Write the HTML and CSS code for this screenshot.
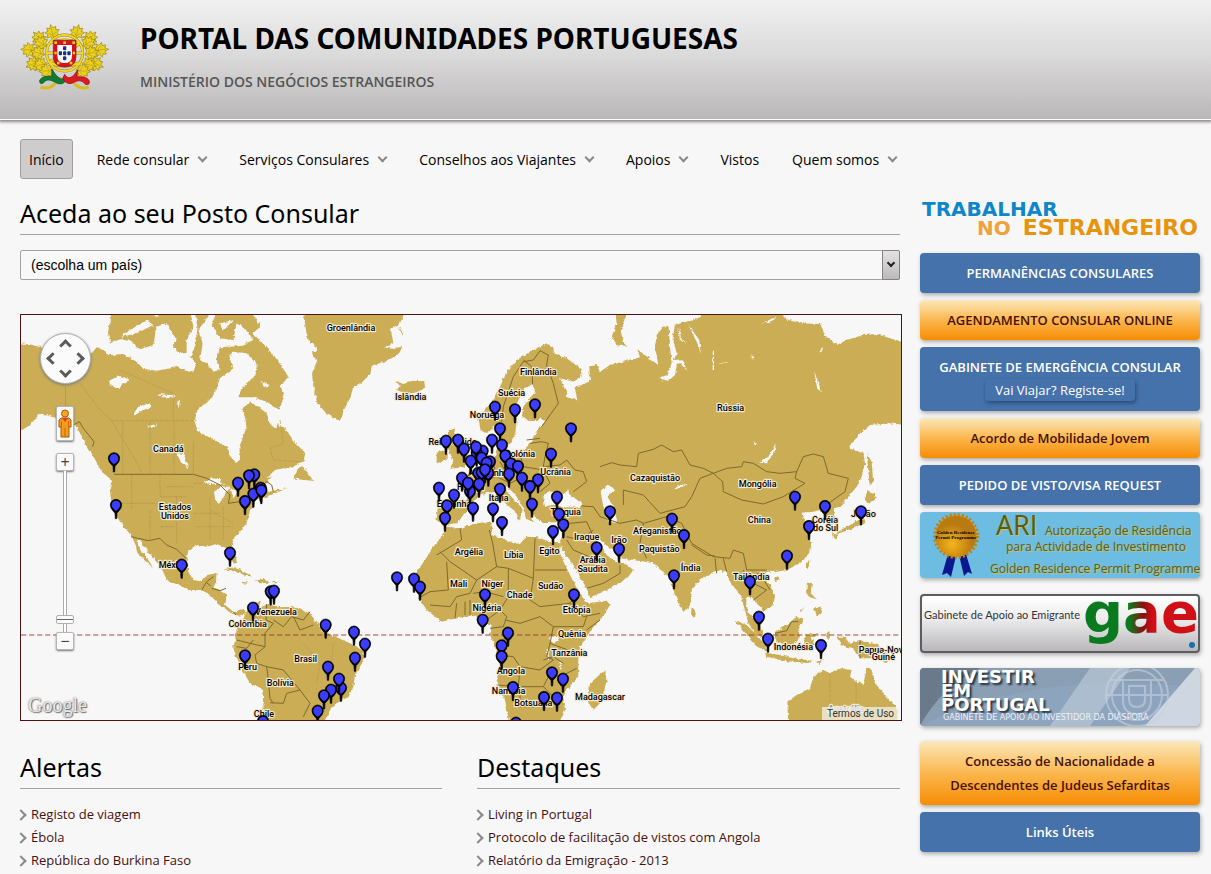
FILE: index.html
```html
<!DOCTYPE html>
<html lang="pt">
<head>
  <meta charset="UTF-8" />
  <meta name="viewport" content="width=device-width, initial-scale=1.0" />
  <title>Portal das Comunidades Portuguesas</title>
  <link rel="stylesheet" href="styles.css">
</head>
<body>
  <header class="site-header">
    <svg class="crest" viewBox="62 73 270 198" role="img" aria-label="Brasão de Portugal">
      <defs>
        <g id="leaf">
          <path d="M0 0 L-8 -8 L-19 -7 L-14 -16 L-22 -24 L-12 -26 L-14 -36 L-5 -33 L0 -44 L5 -33 L14 -36 L12 -26 L22 -24 L14 -16 L19 -7 L8 -8 Z" fill="#ebd022" stroke="#9a8412" stroke-width="2"/>
          <path d="M0 0 V-34 M0 -10 L-11 -20 M0 -10 L11 -20" fill="none" stroke="#b59e18" stroke-width="2"/>
        </g>
        <g id="branch">
          <path d="M188 238 Q110 225 118 130" fill="none" stroke="#b39a14" stroke-width="6"/>
          <use href="#leaf" transform="translate(163 118) rotate(-12)"/>
          <use href="#leaf" transform="translate(132 130) rotate(-42)"/>
          <use href="#leaf" transform="translate(142 140) rotate(-60)"/>
          <use href="#leaf" transform="translate(108 152) rotate(-86)"/>
          <use href="#leaf" transform="translate(136 165) rotate(-75)"/>
          <use href="#leaf" transform="translate(120 184) rotate(-115)"/>
          <use href="#leaf" transform="translate(144 192) rotate(-100)"/>
          <use href="#leaf" transform="translate(162 212) rotate(-95)"/>
        </g>
      </defs>
      <use href="#branch"/>
      <use href="#branch" transform="translate(392 0) scale(-1 1)"/>
      <g fill="none" stroke="#9a8410" stroke-width="9">
        <circle cx="196" cy="160" r="54"/>
        <path d="M142 160 H250 M153 130 Q196 112 239 130 M153 190 Q196 208 239 190 M150 188 L242 132"/>
      </g>
      <g fill="none" stroke="#f0d62a" stroke-width="6">
        <circle cx="196" cy="160" r="54"/>
        <path d="M142 160 H250 M153 130 Q196 112 239 130 M153 190 Q196 208 239 190 M150 188 L242 132"/>
      </g>
      <path d="M162 122 H230 V170 Q230 202 196 202 Q162 202 162 170 Z" fill="#d8121c" stroke="#8c1a10" stroke-width="2"/>
      <path d="M174 136 H218 V168 Q218 190 196 190 Q174 190 174 168 Z" fill="#fff"/>
      <g fill="#e8c81e"><rect x="165" y="125" width="8" height="8"/><rect x="192" y="125" width="8" height="8"/><rect x="219" y="125" width="8" height="8"/><rect x="165" y="156" width="7" height="8"/><rect x="220" y="156" width="7" height="8"/><rect x="173" y="186" width="8" height="8"/><rect x="211" y="186" width="8" height="8"/></g>
      <g fill="#16357c"><rect x="191" y="140" width="10" height="12" rx="3"/><rect x="178" y="155" width="10" height="12" rx="3"/><rect x="191" y="155" width="10" height="12" rx="3"/><rect x="204" y="155" width="10" height="12" rx="3"/><rect x="191" y="170" width="10" height="12" rx="3"/></g>
      <path d="M124 262 Q150 272 168 250 M268 262 Q242 272 224 250" fill="none" stroke="#d8bc1a" stroke-width="9"/>
      <path d="M157 208 L170 226 Q190 250 196 228 L202 240 Q188 262 164 246 Q142 234 132 250 Q120 256 121 242 Q130 226 158 230 Z" fill="#157a35" stroke="#0a5222" stroke-width="2"/>
      <path d="M236 210 L222 228 Q206 242 196 224 L190 236 Q204 262 228 246 Q246 238 258 254 Q272 258 270 244 Q264 228 232 232 Z" fill="#dc1a22" stroke="#941016" stroke-width="2"/>
    </svg>
    <div class="titles">
      <h1>PORTAL DAS COMUNIDADES PORTUGUESAS</h1>
      <p>MINISTÉRIO DOS NEGÓCIOS ESTRANGEIROS</p>
    </div>
  </header>

  <nav class="main-nav">
    <a href="#" class="active">Início</a>
    <a href="#" class="has-sub">Rede consular</a>
    <a href="#" class="has-sub">Serviços Consulares</a>
    <a href="#" class="has-sub">Conselhos aos Viajantes</a>
    <a href="#" class="has-sub">Apoios</a>
    <a href="#">Vistos</a>
    <a href="#" class="has-sub">Quem somos</a>
  </nav>

  <div class="page">
    <main class="content">
      <h2><label for="pais">Aceda ao seu Posto Consular</label></h2>
      <div class="select-box">
        <select id="pais">
          <option>(escolha um país)</option>
        </select>
      </div>

      <div class="map">
        <svg class="world" viewBox="3 15 2640 1215">
          <defs>
            <filter id="coast" x="0" y="0" width="100%" height="100%">
              <feTurbulence type="fractalNoise" baseFrequency="0.09" numOctaves="3" seed="4"/>
              <feDisplacementMap in="SourceGraphic" scale="11" xChannelSelector="R" yChannelSelector="G"/>
            </filter>
            <g id="pin">
              <path d="M-2 39 L-3 22 Q-18 8 -17 -2 A17 17 0 0 1 17 -2 Q18 8 3 22 L2 39 Z" fill="#000" stroke="#000" stroke-width="2"/>
              <path d="M0 16 Q-14 6 -13 -2 A13 13 0 0 1 13 -2 Q14 6 0 16 Z" fill="#3c3cff"/>
            </g>
          </defs>

          <g filter="url(#coast)">
            <rect x="-20" y="0" width="2700" height="1260" fill="#f8f7f7"/>
            <g class="land">
              <!-- North and Central America -->
              <path d="M-10 98 L40 105 60 112 120 122 215 130 230 112 262 120 270 95 264 70 274 0 690 0 722 50 698 70 740 112 772 150 805 200 782 228 792 262 778 300 770 340 800 360 820 392 856 430 850 455 820 470 790 483 760 495 742 515 735 528 745 545 775 540 802 533 770 548 740 560 705 570 690 600 684 625 680 640 660 665 640 685 635 705 645 730 650 752 642 762 630 740 620 715 590 702 560 710 530 705 505 720 500 750 505 785 520 810 545 815 560 795 590 790 588 815 580 835 605 845 620 855 615 885 640 905 668 898 682 905 662 918 640 912 620 900 600 885 570 855 545 840 510 840 475 825 440 810 430 785 405 750 385 725 360 690 350 692 362 722 382 745 398 772 375 752 352 728 348 708 338 685 325 665 300 635 285 610 275 590 270 540 275 510 245 485 215 430 195 400 180 370 165 345 140 335 110 325 60 310 30 345 -10 370 Z"/>
              <path d="M838 465 L858 480 880 512 850 510 820 505 Z"/>
              <path d="M610 778 L645 772 700 800 672 796 640 782 Z M705 812 L735 806 748 818 720 820 Z M665 816 l18 0 -2 5 -14 -1 Z M758 816 l12 0 0 4 -12 0 Z"/>
              <!-- South America -->
              <path d="M680 905 L700 882 722 872 716 894 745 882 780 892 830 890 868 908 885 930 905 960 950 982 990 1000 1022 1015 1035 1040 1020 1070 1005 1095 1000 1130 985 1162 960 1172 930 1200 905 1250 735 1250 730 1180 728 1140 690 1120 670 1085 650 1045 640 1015 645 990 650 960 665 935 Z"/>
              <!-- Greenland, Iceland, British Isles -->
              <path d="M848 0 L858 60 868 100 880 140 892 150 876 190 880 230 893 280 920 312 962 333 972 300 992 260 998 235 1025 218 1052 190 1055 168 1092 155 1140 130 1146 110 1130 90 1150 70 1135 50 1158 0 Z"/>
              <path d="M1126 212 L1150 222 1180 212 1212 214 1216 232 1195 246 1160 252 1130 240 1142 230 Z"/>
              <path d="M1285 362 L1306 355 1300 375 1322 400 1332 432 1350 452 1332 472 1290 476 1300 452 1286 420 1280 385 Z M1250 430 L1280 416 1280 450 1250 460 Z"/>
              <!-- Scandinavia -->
              <path d="M1382 362 L1375 325 1395 300 1420 270 1440 230 1460 185 1490 150 1530 125 1580 100 1600 112 1602 130 1640 145 1682 175 1685 200 1660 215 1620 205 1640 250 1600 325 1560 334 1522 332 1506 318 1510 290 1545 245 1538 222 1515 235 1500 262 1480 300 1490 330 1486 370 1470 402 1450 405 1440 370 1430 342 1400 368 Z"/>
              <!-- Eurasia -->
              <path d="M1255 568 L1340 572 1345 535 1310 515 1345 500 1380 480 1420 455 1435 400 1445 385 1455 430 1500 432 1530 400 1525 370 1550 345 1575 338 1572 300 1600 215 1640 262 1672 270 1664 232 1710 215 1708 170 1730 165 1740 185 1770 165 1820 152 1860 142 1852 118 1895 150 1915 165 1905 110 1910 75 1930 50 1955 46 1975 42 2030 28 2060 0 2280 0 2300 28 2340 40 2400 42 2420 80 2450 105 2480 90 2530 75 2570 72 2610 85 2660 100 2660 345 2610 340 2550 345 2520 370 2485 415 2530 430 2535 460 2525 500 2510 530 2485 560 2460 590 2440 595 2448 640 2425 650 2415 620 2400 600 2380 605 2345 608 2350 625 2365 645 2370 690 2375 710 2360 740 2340 760 2300 780 2270 785 2240 785 2230 800 2250 825 2265 855 2260 885 2230 905 2215 885 2195 862 2180 860 2178 890 2190 915 2210 930 2225 960 2230 985 2205 970 2185 940 2175 900 2165 865 2150 840 2135 825 2120 790 2100 780 2070 790 2040 810 2015 840 2015 870 2005 895 1990 905 1975 880 1960 840 1950 800 1925 785 1905 760 1840 750 1800 745 1760 710 1735 695 1760 735 1790 758 1815 760 1840 780 1825 800 1790 825 1740 850 1710 862 1700 835 1680 800 1650 750 1630 725 1620 695 1635 655 1625 635 1570 640 1545 620 1535 595 1545 580 1525 580 1530 600 1540 636 1522 628 1508 590 1490 560 1462 528 1452 530 1470 556 1500 588 1510 606 1496 632 1488 606 1456 580 1432 546 1400 548 1372 562 1350 590 1330 615 1310 640 1268 646 1250 630 Z"/>
              <path d="M1785 0 L1825 0 1802 60 1808 92 1822 108 1790 106 1775 80 1790 40 Z"/>
              <!-- Africa -->
              <path d="M1280 650 L1265 680 1240 710 1215 750 1190 785 1185 820 1195 860 1220 900 1265 935 1310 925 1360 915 1390 930 1415 945 1410 975 1430 1020 1440 1060 1430 1110 1455 1170 1470 1250 1612 1250 1635 1200 1630 1160 1640 1140 1675 1100 1675 1050 1680 1010 1720 950 1745 925 1770 885 1760 872 1702 880 1678 850 1655 805 1635 765 1618 725 1625 700 1600 698 1550 682 1520 680 1500 702 1480 700 1450 685 1410 675 1420 655 1410 635 1370 640 1320 655 Z"/>
              <path d="M1755 1080 L1762 1110 1740 1180 1720 1200 1705 1170 1710 1120 Z"/>
              <!-- Asian islands -->
              <path d="M2015 895 l8 0 6 22 -10 6 -6 -12 Z M2145 930 L2180 945 2210 975 2240 1010 2242 1025 2215 1012 2185 980 2160 950 Z M2235 1028 L2280 1035 2320 1045 2375 1052 2370 1060 2300 1054 2240 1040 Z M2265 965 L2300 945 2330 920 2350 930 2335 960 2340 980 2320 1005 2280 1000 2265 985 Z M2360 975 L2400 968 2372 985 2385 1000 2375 1020 2355 1010 2352 990 Z M2362 815 L2376 818 2372 850 2390 868 2370 862 2358 850 Z M2380 892 L2405 890 2406 912 2390 916 Z M2340 905 l14 -18 -10 18 Z M2358 760 l10 -10 -2 20 -8 8 Z M2262 805 l12 -6 2 10 -10 4 Z M2388 1056 l22 -8 -12 14 Z M2420 970 l8 -8 2 22 -8 4 Z"/>
              <path d="M2450 980 L2475 980 2485 1000 2520 990 2575 1005 2610 1040 2600 1060 2570 1045 2520 1045 2500 1015 2462 1005 Z"/>
              <path d="M2540 430 L2555 455 2560 520 2548 524 2545 480 Z M2542 540 L2572 560 2545 582 2535 570 Z M2530 615 L2537 640 2512 650 2480 662 2450 672 2452 665 2490 645 2520 628 Z M2440 668 l12 4 -2 18 -10 -8 Z"/>
              <!-- Australia -->
              <path d="M2305 1250 L2302 1175 2330 1155 2370 1135 2380 1100 2410 1080 2430 1090 2460 1075 2495 1080 2490 1100 2530 1125 2540 1070 2555 1080 2565 1120 2600 1160 2630 1195 2635 1250 Z"/>
            </g>
            <g class="water">
              <!-- Hudson Bay, Foxe Basin and strait -->
              <path d="M600 205 L640 175 625 140 640 125 680 130 712 165 700 205 665 235 655 262 700 262 740 275 780 300 800 325 780 332 765 356 748 338 740 310 715 290 690 277 665 296 676 325 679 350 668 385 658 410 660 440 652 460 642 452 628 435 624 410 595 398 565 380 535 365 524 335 533 300 560 275 585 250 Z"/>
              <!-- arctic channels -->
              <path d="M245 110 L300 88 330 92 360 118 400 105 410 50 440 40 470 90 455 105 480 130 500 125 500 90 520 50 510 0 528 0 532 60 525 110 510 140 530 160 520 185 470 172 410 182 370 176 350 155 310 132 262 136 Z M535 60 L565 20 570 0 590 0 575 45 600 85 640 90 650 40 680 60 700 90 660 108 600 112 590 150 600 180 582 185 560 160 540 150 548 100 Z M300 82 L330 60 380 30 400 45 350 70 Z M600 40 L640 30 610 62 Z M370 0 L430 0 410 22 Z M720 215 l30 10 -12 8 Z M610 222 l20 -12 -8 18 Z"/>
              <!-- lakes -->
              <path d="M265 212 L300 198 328 208 305 222 298 238 280 230 Z M340 312 L355 290 392 280 395 290 365 302 345 316 Z M470 430 L492 432 505 475 482 455 Z M548 522 L575 505 600 508 612 525 590 522 Z M582 545 L605 530 628 530 615 555 598 580 586 570 Z M632 535 L655 545 640 565 Z M380 350 l35 -10 -20 14 Z M410 252 l50 4 10 8 -40 -2 Z M470 280 l10 -8 -4 22 Z"/>
              <path d="M740 505 L765 480 850 462 830 480 770 496 Z"/>
              <path d="M1112 55 L1150 40 1135 55 1160 95 1125 118 1090 112 1120 100 Z M840 85 L880 100 895 125 862 128 Z"/>
              <!-- Baltic, Black Sea, Caspian, Aral -->
              <path d="M1500 370 L1545 340 1560 325 1576 335 1550 360 1535 395 1505 425 1480 415 Z"/>
              <path d="M1575 590 L1570 560 1585 542 1610 548 1630 552 1645 540 1650 558 1685 575 1680 592 1630 592 1600 584 Z"/>
              <path d="M1742 545 L1765 525 1786 538 1762 560 1782 590 1792 638 1765 636 1752 600 Z M1960 540 L1978 525 2005 522 1985 532 Z"/>
              <!-- Persian Gulf -->
              <path d="M1720 680 L1740 690 1770 715 1805 738 1795 752 1765 735 1740 708 Z"/>
              <!-- Ob gulf, Yenisei, Baikal and other rivers -->
              <path d="M1945 40 L1965 45 1958 85 1970 130 1962 150 1988 148 2000 182 1982 160 1970 165 1965 195 1945 212 1915 205 1942 195 1955 160 1950 110 Z M1975 50 L1985 90 2000 98 1980 92 Z M2005 45 L2038 90 2042 128 2032 100 Z"/>
              <path d="M2218 458 L2245 440 2268 400 2262 432 2238 460 Z M2382 180 L2390 205 2402 243 2392 238 Z M2225 42 L2270 18 2262 30 Z M2078 125 l4 0 0 55 -4 0 Z M2095 162 l24 -6 0 4 Z M2195 130 l6 18 -6 0 Z M2395 130 l15 -20 -4 14 Z M2200 392 l12 10 -8 0 Z"/>
              <path d="M1585 985 L1605 975 1615 990 1600 1000 Z M1618 1055 l5 0 3 28 -4 0 Z M1580 1020 l4 0 4 30 -4 0 Z"/>
              <path d="M2405 30 L2432 70 2412 75 Z M2410 15 l60 0 -20 30 -25 0 Z M2500 0 L2643 0 2643 60 2570 50 2520 20 Z"/>
            </g>
          </g>

          <g class="state">
            <path d="M298 180 L460 250 V330 M270 332 H530 M308 332 V495 M390 332 V495 M462 332 V495 M180 220 L240 300 275 332 340 440 370 495 M520 490 V395 M780 330 L790 400 750 415 760 450 840 455"/>
            <path d="M335 495 V600 M275 580 H420 M420 495 V560 H500 M440 530 H520 M390 600 V690 M470 560 V700 M520 520 H570 M520 610 H600 M530 650 H640 M570 560 V690 M610 590 V690 M420 650 H470 M570 600 L640 640"/>
            <path d="M2430 1092 V1230 M2508 1110 V1230 M850 1000 L900 1060 890 1120 M940 1000 L930 1100"/>
          </g>
          <g class="border">
            <path d="M160 345 L178 335 190 355 222 395 218 410 M282 493 H520 L560 505 600 525 630 555 625 580 680 572 705 545 740 515 755 525 760 545 M333 680 L385 692 420 685 440 705 470 718 498 745 M545 840 L560 815 580 800 M575 835 L600 842 618 835 M560 818 L572 828 M640 905 L648 915"/>
            <path d="M650 990 L690 1000 735 1010 M740 882 L738 930 760 940 735 970 735 1010 705 1035 710 1060 740 1070 745 1110 750 1165 760 1180 M740 1070 L790 1080 815 1110 840 1140 800 1150 790 1180 750 1178 M840 1140 L870 1180 850 1220 M760 930 L790 950 815 920 850 930 870 905 M820 920 L840 960 880 945 M650 1010 L680 1015 700 990"/>
            <path d="M1445 335 L1450 290 1480 200 1510 155 1540 150 1560 122 1585 135 1580 165 1600 220 1615 280 1565 350 M1510 150 L1535 170 1538 222 M1530 400 L1565 395 1585 400 1575 440 1570 470 1620 465 1640 450 1665 480 1690 485 1700 515 1660 545 M1500 432 L1510 470 1460 490 1440 455 M1510 470 L1570 480 1590 520 1560 545 M1515 510 L1560 520 M1420 460 L1430 500 1390 510 M1430 500 L1470 520 1510 500 M1520 390 L1560 385 M1340 572 L1372 590 M1285 575 L1280 640"/>
            <path d="M1740 470 L1775 458 1800 465 1850 470 1855 430 1900 418 1925 405 1960 425 1985 420 2010 465 2050 475 2080 490 2040 505 2015 560 1995 590 1920 610 1870 555 1810 540 1810 585 M2080 490 L2120 475 2165 470 2170 455 2200 460 2240 485 2280 490 2330 485 2350 440 2380 432 2410 440 2425 490 2485 505 2475 545 2425 580 M2080 490 L2108 515 2110 545 2165 570 2230 582 2290 560 2355 520 2325 505 2330 485"/>
            <path d="M1685 588 L1720 590 1740 620 1800 640 1850 630 1870 640 M1650 640 L1700 635 1720 680 M1640 680 L1680 690 1720 660 M1870 640 L1860 700 1880 745 M1870 640 L1940 620 1985 640 2010 690 2015 700 2080 740 2130 745 2140 720 2170 730 2180 780 2240 780 M2015 705 L2060 735 2085 738 M2085 745 L2090 790 M2120 785 L2110 745 M2170 780 L2180 810 2240 840 2200 870 M2190 800 L2220 790 2250 840 M1700 835 L1750 820 1800 790 1800 765 M1640 690 L1660 720 1720 745 1760 760"/>
            <path d="M1320 655 L1325 690 1250 735 M1260 725 L1290 755 1370 810 1430 770 1418 700 1408 660 M1280 755 L1285 840 1230 845 1195 865 M1370 810 L1350 850 1310 860 1290 890 1230 885 M1430 770 L1465 775 1465 860 1440 900 M1465 775 L1540 805 1545 685 M1545 780 H1640 M1540 805 L1530 870 1560 890 1650 880 1670 850 M1360 850 L1395 845 1450 860 M1350 870 V915 M1335 875 V915 M1310 880 L1305 925 M1400 930 L1440 900 1460 920 1450 950 1410 955 M1455 930 L1500 940 1560 920 M1460 950 L1450 1000 1430 1025 M1560 920 L1600 950 1590 1000 1580 1040 1600 1050 1560 1080 1500 1070 1480 1040 1440 1035 M1600 950 L1690 950 1700 920 M1590 1000 L1670 1030 M1500 1070 L1495 1130 1430 1125 M1495 1130 L1570 1130 1600 1160 M1570 1130 L1590 1090 1620 1100 1670 1075 M1500 1130 V1190 L1580 1190 M1570 1050 L1600 1040 1630 1060 M1740 930 L1700 960 M1650 880 L1690 920 1740 910"/>
            <path d="M2265 970 L2300 962 2315 935 2335 935 M2520 990 V1045"/>
          </g>
          <path class="equator" d="M3 975 H2643"/>

          <g class="labels">
            <text x="993" y="64">Groenlândia</text>
            <text x="1172" y="271">Islândia</text>
            <text x="1555" y="196">Finlândia</text>
            <text x="1475" y="259">Suécia</text>
            <text x="1401" y="325">Noruega</text>
            <text x="1298" y="406">Reino Unido</text>
            <text x="1500" y="442">Polónia</text>
            <text x="1607" y="496">Ucrânia</text>
            <text x="1405" y="499">Alemanha</text>
            <text x="1352" y="541">França</text>
            <text x="1436" y="574">Itália</text>
            <text x="1302" y="592">Espanha</text>
            <text x="1637" y="616">Turquia</text>
            <text x="445" y="427">Canadá</text>
            <text x="465" y="601">Estados</text>
            <text x="465" y="627">Unidos</text>
            <text x="460" y="775">México</text>
            <text x="768" y="916">Venezuela</text>
            <text x="683" y="952">Colômbia</text>
            <text x="683" y="1081">Peru</text>
            <text x="857" y="1057">Brasil</text>
            <text x="781" y="1129">Bolívia</text>
            <text x="732" y="1222">Chile</text>
            <text x="1347" y="736">Argélia</text>
            <text x="1481" y="744">Líbia</text>
            <text x="1588" y="733">Egito</text>
            <text x="1316" y="831">Mali</text>
            <text x="1417" y="831">Níger</text>
            <text x="1499" y="864">Chade</text>
            <text x="1592" y="838">Sudão</text>
            <text x="1401" y="904">Nigéria</text>
            <text x="1670" y="910">Etiópia</text>
            <text x="1656" y="982">Quênia</text>
            <text x="1648" y="1039">Tanzânia</text>
            <text x="1473" y="1093">Angola</text>
            <text x="1466" y="1152">Namíbia</text>
            <text x="1540" y="1188">Botsuana</text>
            <text x="1740" y="1171">Madagascar</text>
            <text x="1700" y="691">Iraque</text>
            <text x="1797" y="699">Irão</text>
            <text x="1718" y="760">Arábia</text>
            <text x="1718" y="787">Saudita</text>
            <text x="1912" y="673">Afeganistão</text>
            <text x="1918" y="727">Paquistão</text>
            <text x="2012" y="784">Índia</text>
            <text x="1905" y="514">Cazaquistão</text>
            <text x="2132" y="304">Rússia</text>
            <text x="2213" y="532">Mongólia</text>
            <text x="2218" y="640">China</text>
            <text x="2415" y="640">Coréia</text>
            <text x="2417" y="664">do Sul</text>
            <text x="2530" y="622">Japão</text>
            <text x="2194" y="811">Tailândia</text>
            <text x="2320" y="1021">Indonésia</text>
            <text x="2590" y="1028">Papua-Nova</text>
            <text x="2590" y="1051">Guiné</text>
            <text x="2478" y="1205" class="faded">Austrália</text>
          </g>
          <g id="pins"></g>
        </svg>

        <div class="map-controls">
          <div class="pan">
            <button class="up" aria-label="Norte"></button>
            <button class="left" aria-label="Oeste"></button>
            <button class="right" aria-label="Este"></button>
            <button class="down" aria-label="Sul"></button>
          </div>
          <span class="stem"></span>
          <button class="pegman" aria-label="Street View">
            <svg viewBox="0 0 14 29"><path d="M3 9 H11 L13 11 V18 H11 V28 H3 V18 H1 V11 Z" fill="#f59a1b" stroke="#a8580a"/><circle cx="7" cy="4.500" r="3.500" fill="#f8a624" stroke="#a8580a"/><path d="M4 9 L7 13 L10 9 Z" fill="#d9401a"/><path d="M7 19 V28 M3.500 12 V18 M10.500 12 V18" stroke="#c06a10" fill="none"/></svg>
          </button>
          <button class="zoom" aria-label="Aumentar o zoom">+</button>
          <input class="zoom-level" type="range" min="0" max="18" value="1" aria-label="Nível de zoom">
          <button class="zoom" aria-label="Diminuir o zoom">−</button>
        </div>
        <span class="google">Google</span>
        <a href="#" class="terms">Termos de Uso</a>
      </div>

      <div class="news">
        <section>
          <h2>Alertas</h2>
          <ul>
            <li><a href="#">Registo de viagem</a></li>
            <li><a href="#">Ébola</a></li>
            <li><a href="#">República do Burkina Faso</a></li>
          </ul>
        </section>
        <section>
          <h2>Destaques</h2>
          <ul>
            <li><a href="#">Living in Portugal</a></li>
            <li><a href="#">Protocolo de facilitação de vistos com Angola</a></li>
            <li><a href="#">Relatório da Emigração - 2013</a></li>
          </ul>
        </section>
      </div>
    </main>

    <aside class="sidebar">
      <a href="#" class="work"><span class="work-top">TRABALHAR</span><span class="work-bottom"><span class="no">NO</span>ESTRANGEIRO</span></a>
      <a href="#" class="btn blue">PERMANÊNCIAS CONSULARES</a>
      <a href="#" class="btn orange">AGENDAMENTO CONSULAR ONLINE</a>
      <div class="btn blue">
        <a href="#">GABINETE DE EMERGÊNCIA CONSULAR</a>
        <a href="#" class="register">Vai Viajar? Registe-se!</a>
      </div>
      <a href="#" class="btn orange">Acordo de Mobilidade Jovem</a>
      <a href="#" class="btn blue">PEDIDO DE VISTO/VISA REQUEST</a>
      <a href="#" class="banner ari">
        <svg viewBox="0 0 280 66">
          <defs><radialGradient id="gold" cx=".4" cy=".7"><stop offset="0" stop-color="#f6b51c"/><stop offset="1" stop-color="#b97a12"/></radialGradient></defs>
          <path d="M28 42 L22 63 L27 61 L31 65 L36 44 Z M39 43 L44 64 L48 60 L52 62 L46 42 Z" fill="#0b1791"/>
          <circle cx="36" cy="24" r="21" fill="#d99a10" stroke="#b98418" stroke-width="4" stroke-dasharray="2 2"/>
          <circle cx="36" cy="24" r="20" fill="url(#gold)"/>
          <text x="36" y="22" class="seal">Golden Residence</text>
          <text x="36" y="27" class="seal">Permit Programme</text>
          <g class="ari-text">
            <text x="76" y="23" class="ari-big">ARI</text>
            <text x="125" y="23">Autorização de Residência</text>
            <text x="86" y="39">para Actividade de Investimento</text>
            <text x="70" y="61">Golden Residence Permit Programme</text>
          </g>
        </svg>
      </a>
      <a href="#" class="banner gae">
        <svg viewBox="0 0 276 55">
          <defs><linearGradient id="flag"><stop offset=".4" stop-color="#0a7a1e"/><stop offset=".52" stop-color="#8a1010"/><stop offset=".6" stop-color="#cf1016"/></linearGradient></defs>
          <text x="2" y="23" class="gae-text">Gabinete de Apoio ao Emigrante</text>
          <text x="161" y="36" class="gae-logo" fill="url(#flag)">gae</text>
          <circle cx="270" cy="49" r="3" fill="#1672a8"/>
        </svg>
      </a>
      <a href="#" class="banner invest">
        <svg viewBox="0 0 280 58">
          <path d="M0 0 H60 Q20 20 0 58 Z" fill="#6b7a8a"/>
          <path d="M0 58 Q120 0 280 20 V58 Z" fill="#8fa9c4" opacity=".6"/>
          <path d="M130 58 L170 0 H210 L170 58 Z" fill="#c2cedb" opacity=".6"/>
          <path d="M225 58 L275 0 H280 V58 Z" fill="#dfe4ea" opacity=".8"/>
          <g fill="none" stroke="#c6d1dc" stroke-width="2" opacity=".6"><circle cx="217" cy="27" r="25"/><circle cx="217" cy="27" r="31"/><path d="M203 12 H231 V32 Q231 46 217 46 Q203 46 203 32 Z M209 18 H225 V31 Q225 39 217 39 Q209 39 209 31 Z M186 27 H248 M190 12 H244"/></g>
          <g class="invest-big">
            <text x="21" y="15">INVESTIR</text>
            <text x="21" y="29">EM</text>
            <text x="21" y="43">PORTUGAL</text>
          </g>
          <text x="23" y="52" class="invest-small">GABINETE DE APOIO AO INVESTIDOR DA DIÁSPORA</text>
        </svg>
      </a>
      <a href="#" class="btn orange">Concessão de Nacionalidade a Descendentes de Judeus Sefarditas</a>
      <a href="#" class="btn blue">Links Úteis</a>
    </aside>
  </div>
  <script src="map.js"></script>
</body>
</html>
```

FILE: styles.css
```css
*, *::before, *::after {
  box-sizing: border-box;
}
body {
  margin: 0;
  background-color: #f8f7f7;
  font-family: "Open Sans", "Noto Sans", sans-serif;
  font-size: 13px;
  color: #000;
}
a {
  color: inherit;
  text-decoration: none;
}
button {
  padding: 0;
  font-family: inherit;
  cursor: pointer;
}
svg {
  display: block;
}

/* header */
.site-header {
  display: flex;
  align-items: flex-start;
  gap: 30px;
  height: 120px;
  padding: 20px 20px 0;
  background: linear-gradient(#f1f1f1, #dcdbdb 45%, #b9b7b7);
  border-bottom: 1px solid #fff;
  box-shadow: 0 1px 3px 1px #8a8686;
}
.crest {
  width: 90px;
  height: 66px;
  margin-top: 4px;
}
.titles h1 {
  margin: 0;
  font-size: 28px;
  line-height: 36px;
  font-weight: 700;
  font-family: "Noto Sans", sans-serif;
}
.titles p {
  margin: 14px 0 0;
  font-size: 14px;
  line-height: 24px;
  font-weight: 600;
  color: #555;
}

/* menu */
.main-nav {
  display: flex;
  gap: 15px;
  padding: 19px 20px 0;
}
.main-nav a {
  display: flex;
  align-items: center;
  height: 40px;
  padding: 0 8px;
  border: 1px solid transparent;
  border-radius: 3px;
  font-size: 14px;
}
.main-nav a.active {
  background-color: #cfccce;
  border-color: #a19ea0;
}
.main-nav .has-sub::after {
  content: "";
  width: 7px;
  height: 7px;
  margin: -4px 0 0 10px;
  border: solid #888;
  border-width: 0 2px 2px 0;
  transform: rotate(45deg);
}

/* columns */
.page {
  display: flex;
  gap: 20px;
  padding: 0 11px 0 20px;
}
.content {
  flex: 1;
  min-width: 0;
}
.sidebar {
  width: 280px;
  display: flex;
  flex-direction: column;
  gap: 7px;
  padding-top: 20px;
}
h2 {
  margin: 0;
  padding: 18px 0 5px;
  border-bottom: 1px solid #a5a2a3;
  font-size: 25px;
  line-height: 32px;
  font-weight: 400;
  font-family: "Noto Sans", sans-serif;
}
.select-box {
  position: relative;
  margin: 15px 0 34px;
}
.select-box select {
  display: block;
  width: 100%;
  height: 30px;
  padding: 0 10px;
  appearance: none;
  background-color: #f9f8f8;
  border: 1px solid #a5a2a3;
  border-radius: 2px;
  font-family: "Liberation Sans", Arial, sans-serif;
  font-size: 14px;
  color: #000;
}
.select-box::before {
  content: "";
  position: absolute;
  top: 0;
  right: 0;
  width: 18px;
  height: 30px;
  background: linear-gradient(#e4e2e3, #bbb9ba);
  border: 1px solid #858283;
  border-radius: 0 2px 2px 0;
  pointer-events: none;
}
.select-box::after {
  content: "";
  position: absolute;
  top: 10px;
  right: 6px;
  width: 6px;
  height: 6px;
  border: solid #222;
  border-width: 0 2px 2px 0;
  transform: rotate(45deg);
  pointer-events: none;
}

/* map */
.map {
  position: relative;
  margin-right: -2px;
  border: 1px solid #4a1414;
  overflow: hidden;
}
.world {
  width: 100%;
}
.land {
  fill: #cbad57;
}
.water {
  fill: #f8f7f7;
}
.border {
  fill: none;
  stroke: #7d6a2c;
  stroke-width: 3;
}
.state {
  fill: none;
  stroke: #b3974a;
  stroke-width: 2;
  stroke-dasharray: 12 3;
}
.equator {
  stroke: #a5382a;
  stroke-opacity: 0.6;
  stroke-width: 4;
  stroke-dasharray: 16 8;
}
.labels text {
  font-family: Roboto, sans-serif;
  font-size: 27px;
  font-weight: 500;
  text-anchor: middle;
  paint-order: stroke;
  stroke: #f3ead2;
  stroke-width: 7px;
  stroke-linejoin: round;
}
.labels .faded {
  fill: #888;
}
.map-controls {
  position: absolute;
  top: 18px;
  left: 18px;
  width: 52px;
  display: flex;
  flex-direction: column;
  align-items: center;
}
.map-controls button {
  background-color: #fafafa;
  border: 1px solid #b5b5b5;
  border-radius: 2px;
}
.pan {
  width: 51px;
  height: 51px;
  padding: 5px;
  display: grid;
  grid-template-columns: 1fr 1fr 1fr;
  grid-template-areas: ". up ." "left . right" ". down .";
  place-items: center;
  border: 1px solid #b0b0b0;
  border-radius: 50%;
  background-color: #fbfbfb;
  box-shadow: 0 1px 3px #777;
}
.map-controls .pan button {
  width: 9px;
  height: 9px;
  background: none;
  border: solid #5a5a5e;
  border-width: 3px 3px 0 0;
  border-radius: 0;
}
.pan .up {
  grid-area: up;
  transform: rotate(-45deg);
}
.pan .right {
  grid-area: right;
  transform: rotate(45deg);
}
.pan .down {
  grid-area: down;
  transform: rotate(135deg);
}
.pan .left {
  grid-area: left;
  transform: rotate(225deg);
}
.stem {
  width: 1px;
  height: 22px;
  background-color: #999;
}
.map-controls .pegman {
  width: 18px;
  height: 35px;
  margin-bottom: 12px;
  padding: 2px 1px;
  box-shadow: 0 1px 2px #777;
}
.pegman svg {
  width: 100%;
  height: 29px;
}
.map-controls .zoom {
  width: 18px;
  height: 18px;
  font-size: 16px;
  line-height: 14px;
  color: #444;
  box-shadow: 0 1px 2px #777;
}
.zoom-level {
  appearance: none;
  writing-mode: vertical-lr;
  direction: rtl;
  width: 18px;
  height: 161px;
  margin: 0;
  background: linear-gradient(90deg, transparent 7px, #aaa 7px 8px, #fff 8px 10px, #aaa 10px 11px, transparent 11px);
}
.zoom-level::-webkit-slider-thumb {
  appearance: none;
  width: 18px;
  height: 9px;
  border: 1px solid #b0b0b0;
  border-radius: 2px;
  background: linear-gradient(#fafafa 3px, #666 3px 4px, #fafafa 4px);
}
.google {
  position: absolute;
  left: 7px;
  bottom: 2px;
  font-family: "Liberation Serif", serif;
  font-size: 20px;
  line-height: 26px;
  color: #e8e8e8;
  text-shadow: 0 0 2px #555, 1px 1px 1px #777;
}
.terms {
  position: absolute;
  right: 0;
  bottom: 0;
  padding: 0 7px 0 5px;
  background-color: rgba(245, 243, 240, 0.7);
  font-family: Roboto, sans-serif;
  font-size: 10px;
  line-height: 13px;
  color: #333;
}

/* news */
.news {
  display: grid;
  grid-template-columns: 422px 1fr;
  gap: 35px;
  margin-top: 12px;
}
.news ul {
  margin: 14px 0 0;
  padding: 0;
  list-style: none;
}
.news li {
  display: flex;
  align-items: center;
  font-size: 13px;
  line-height: 23px;
  color: #451010;
}
.news li::before {
  content: "";
  width: 8px;
  height: 8px;
  margin: 0 6px 0 -3px;
  border: solid #8a8a8a;
  border-width: 2px 2px 0 0;
  transform: rotate(45deg);
}

/* sidebar */
.work {
  display: flex;
  flex-direction: column;
  margin-bottom: 9px;
  padding: 0 2px;
  font-family: "DejaVu Sans", sans-serif;
  font-weight: 700;
}
.work-top {
  font-size: 20px;
  line-height: 20px;
  color: #0f86cc;
}
.work-bottom {
  display: flex;
  justify-content: flex-end;
  gap: 12px;
  font-size: 22px;
  line-height: 18px;
  color: #e8930c;
}
.no {
  font-size: 20px;
  color: #efa23c;
}
.btn {
  padding: 8px 10px;
  border-radius: 4px;
  text-align: center;
  font-weight: 600;
  line-height: 24px;
  box-shadow: 1px 2px 4px #aaa;
}
.blue {
  background-color: #4672ab;
  color: #fff;
}
.orange {
  background: linear-gradient(#fbe8ba, #fbb74e 50%, #f78c04);
  color: #451005;
}
.btn a {
  display: block;
}
.btn .register {
  width: 150px;
  margin: 0 auto;
  border-radius: 4px;
  font-weight: 400;
  line-height: 22px;
  margin-bottom: 2px;
  box-shadow: 1px 2px 4px #29497a;
}
.banner {
  overflow: hidden;
  border-radius: 4px;
  box-shadow: 1px 2px 4px #aaa;
}
.ari {
  margin-bottom: 9px;
  background-color: #6dbde3;
}
.seal {
  font-family: "Liberation Serif", serif;
  font-size: 5px;
  font-weight: 700;
  text-anchor: middle;
}
.ari-text {
  font-size: 12px;
  font-weight: 400;
  fill: #5c5a1c;
  text-shadow: 1px 1px 1px #d8c250;
}
.ari-big {
  font-size: 27px;
}
.gae {
  margin-bottom: 8px;
  border: 2px solid #5d5c62;
  background: linear-gradient(#fff, #ededee 40%, #b9b7ba);
}
.gae-text {
  font-family: Lato, sans-serif;
  font-size: 11px;
  fill: #333;
}
.gae-logo {
  font-family: "DejaVu Sans", sans-serif;
  font-size: 56px;
  font-weight: 700;
}
.invest {
  margin-bottom: 8px;
  background-color: #8a9fb4;
}
.invest-big {
  font-family: "DejaVu Sans", sans-serif;
  font-size: 18px;
  font-weight: 700;
  fill: #fff;
  text-shadow: 2px 2px 2px #26323e;
}
.invest-small {
  font-family: "DejaVu Sans", sans-serif;
  font-size: 8px;
  fill: #eef1f4;
}
```

FILE: map.js
```js
// consular posts on the map, in the units of the map's viewBox
const posts = [
  [282, 447], [288, 587], [654, 520], [703, 495], [687, 498], [722, 535], [700, 553], [724, 542], [675, 575],
  [485, 766], [630, 730], [752, 846], [762, 844], [699, 895], [675, 1038], [729, 1235],
  [917, 946], [1002, 967], [1035, 1003], [1005, 1045], [924, 1072], [963, 1135], [957, 1108], [933, 1141], [912, 1158], [893, 1204],
  [1131, 804], [1182, 808], [1200, 832], [1395, 855], [1388, 931], [1464, 970], [1445, 1008], [1445, 1040],
  [1479, 1133], [1596, 1089], [1629, 1108], [1572, 1163], [1611, 1165], [1488, 1240], [1662, 855],
  [1425, 292], [1485, 300], [1545, 285], [1653, 357], [1593, 433], [1440, 357], [1278, 394], [1314, 391],
  [1332, 418], [1416, 391], [1446, 406], [1388, 424], [1370, 430], [1368, 412], [1385, 445], [1352, 454],
  [1456, 438], [1473, 462], [1494, 470], [1467, 493], [1506, 505], [1554, 510], [1530, 530], [1410, 456],
  [1400, 460], [1375, 490], [1385, 488], [1405, 490], [1395, 480], [1326, 505], [1350, 545], [1344, 520], [1377, 523],
  [1257, 535], [1302, 556], [1281, 588], [1275, 625], [1359, 595], [1419, 597], [1446, 638], [1440, 538], [1536, 583],
  [1611, 562], [1617, 613], [1630, 645], [1599, 665], [1730, 714],
  [1770, 606], [1956, 628], [2325, 562], [2415, 590], [2523, 606], [2367, 650], [1992, 677], [1797, 718],
  [1962, 798], [2301, 739], [2190, 816], [2217, 922], [2244, 988], [2403, 1007]
];

const pins = document.getElementById("pins");
posts.forEach(([x, y]) => {
  const pin = document.createElementNS("http://www.w3.org/2000/svg", "use");
  pin.setAttribute("href", "#pin");
  pin.setAttribute("x", x);
  pin.setAttribute("y", y);
  pins.appendChild(pin);
});
```
